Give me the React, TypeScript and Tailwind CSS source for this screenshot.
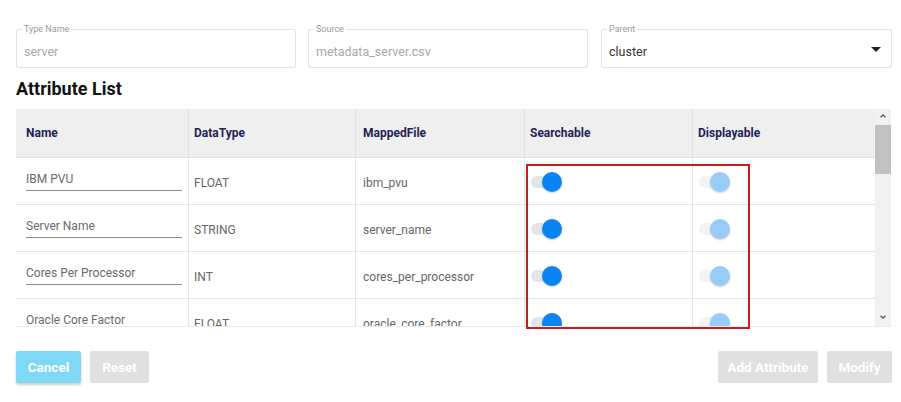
import React from "react";

interface Attribute {
  name: string;
  dataType: string;
  mappedFile: string;
}

const attributes: Attribute[] = [
  { name: "IBM PVU", dataType: "FLOAT", mappedFile: "ibm_pvu" },
  { name: "Server Name", dataType: "STRING", mappedFile: "server_name" },
  { name: "Cores Per Processor", dataType: "INT", mappedFile: "cores_per_processor" },
  { name: "Oracle Core Factor", dataType: "FLOAT", mappedFile: "oracle_core_factor" },
];

function Field({ label, value, disabled, select, className }: { label: string; value: string; disabled?: boolean; select?: boolean; className: string }) {
  return (
    <fieldset className={`border border-[#e3e3e3] rounded-[2px] ${className}`}>
      <legend className="ml-[5px] px-[2px] text-[9px] leading-[10px] text-[#9a9a9a]">{label}</legend>
      <div className="h-[33px] flex items-center justify-between pl-[7px] pr-[3px] pt-[4px]">
        <span className={`text-[12.5px] ${disabled ? "text-[#a8a8a8]" : "text-[#333]"}`}>{value}</span>
        {select && (
          <svg viewBox="0 0 24 24" className="w-6 h-6 -mt-[8px]" fill="#222">
            <path d="M7 10l5 5 5-5z" />
          </svg>
        )}
      </div>
    </fieldset>
  );
}

function Toggle({ light }: { light?: boolean }) {
  return (
    <div className="relative w-[34px] h-[20px] flex items-center">
      <div className={`w-[28px] h-[12px] rounded-full ${light ? "bg-[#f1f3f5]" : "bg-[#e1e5ea]"}`} />
      <div
        className={`absolute left-[11px] top-0 w-[20px] h-[20px] rounded-full shadow-[0_1px_2px_rgba(0,0,0,0.2)] ${light ? "bg-[#97cbfa]" : "bg-[#0a84f2]"}`}
      />
    </div>
  );
}

const cols = "grid grid-cols-[173px_167px_169px_168px_182px]";

export default function App() {
  return (
    <div className="w-[901px] h-[402px] bg-white font-['Roboto',sans-serif] pt-6 pl-4">
      <div className="w-[876px]">
        {/* top fields */}
        <div className="flex">
          <Field label="Type Name" value="server" disabled className="w-[280px]" />
          <Field label="Source" value="metadata_server.csv" disabled className="w-[280px] ml-[12px]" />
          <Field label="Parent" value="cluster" select className="w-[291px] ml-[13px]" />
        </div>

        <h2 className="mt-[9px] text-[18px] leading-6 font-bold text-[#111]">Attribute List</h2>

        {/* table */}
        <div className="relative mt-2">
          <div className="flex h-[218px] border-b border-[#ececec]">
            <div className="w-[859px] overflow-hidden">
              <div className={`${cols} h-[49px] bg-[#efefef] border-b border-[#e2e2e2] text-[12px] font-bold text-[#231f55]`}>
                <div className="flex items-center pl-[10px] border-r border-[#e2e2e2]">Name</div>
                <div className="flex items-center pl-[5px] border-r border-[#e2e2e2]">DataType</div>
                <div className="flex items-center pl-[7px] border-r border-[#e2e2e2]">MappedFile</div>
                <div className="flex items-center pl-[5px] border-r border-[#e2e2e2]">Searchable</div>
                <div className="flex items-center pl-[5px]">Displayable</div>
              </div>
              {attributes.map((a) => (
                <div key={a.name} className={`${cols} h-[47px] border-b border-[#e6e6e6] text-[12px] text-[#666]`}>
                  <div className="flex items-center pl-[10px] border-r border-[#e6e6e6]">
                    <div className="w-[156px] -mt-[1px] border-b border-[#8a8a8a] pb-[3px] leading-4 text-[#6a6a6a]">{a.name}</div>
                  </div>
                  <div className="flex items-center pl-[5px] border-r border-[#e6e6e6] pt-[3px]">{a.dataType}</div>
                  <div className="flex items-center pl-[7px] border-r border-[#e6e6e6] pt-[3px]">{a.mappedFile}</div>
                  <div className="flex items-center pl-[6px] border-r border-[#e6e6e6] pt-[2px]">
                    <Toggle />
                  </div>
                  <div className="flex items-center pl-[6px] pt-[2px]">
                    <Toggle light />
                  </div>
                </div>
              ))}
            </div>
            {/* scrollbar */}
            <div className="w-[16px] bg-[#f1f1f1] flex flex-col items-center">
              <svg viewBox="0 0 10 10" className="w-[8px] h-[8px] mt-[3px]" fill="none" stroke="#505050" strokeWidth="1.6">
                <path d="M2 6.5l3-3 3 3" />
              </svg>
              <div className="w-full h-[49px] mt-[5px] bg-[#c1c1c1]" />
              <div className="flex-1" />
              <svg viewBox="0 0 10 10" className="w-[8px] h-[8px] mb-[5px]" fill="none" stroke="#505050" strokeWidth="1.6">
                <path d="M2 3.5l3 3 3-3" />
              </svg>
            </div>
          </div>
          {/* highlight annotation */}
          <div className="absolute left-[510px] top-[55px] w-[224px] h-[165px] border-2 border-[#c81d1d] pointer-events-none" />
        </div>

        {/* actions */}
        <div className="flex justify-between mt-[24px]">
          <div className="flex gap-[9px]">
            <button className="w-[65px] h-[32px] rounded-[2px] bg-[#7fd9f6] text-white text-[13.5px] font-bold shadow-[0_2px_3px_rgba(0,0,0,0.2)]">Cancel</button>
            <button className="w-[59px] h-[32px] rounded-[2px] bg-[#e0e0e0] text-white text-[13.5px] font-bold">Reset</button>
          </div>
          <div className="flex gap-[9px]">
            <button className="w-[100px] h-[32px] rounded-[2px] bg-[#e0e0e0] text-white text-[13.5px] font-bold">Add Attribute</button>
            <button className="w-[65px] h-[32px] rounded-[2px] bg-[#e0e0e0] text-white text-[13.5px] font-bold">Modify</button>
          </div>
        </div>
      </div>
    </div>
  );
}
